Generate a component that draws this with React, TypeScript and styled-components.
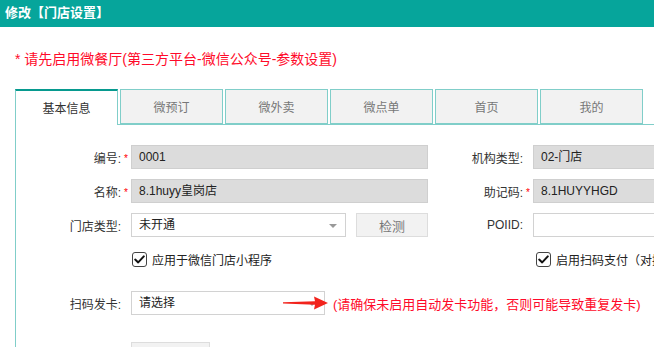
import React from "react";
import styled, { createGlobalStyle } from "styled-components";

const GlobalStyle = createGlobalStyle`
  html, body { margin: 0; padding: 0; background: #fff; }
  body {
    width: 654px; height: 347px; overflow: hidden;
    font-family: "Liberation Sans", Arial, "Noto Sans CJK SC", sans-serif;
    font-size: 12px; color: #333;
  }
  * { box-sizing: border-box; }
`;

const Page = styled.div`
  width: 654px;
  height: 347px;
  overflow: hidden;
`;

const Header = styled.div`
  height: 27px;
  background: #06a59b;
  color: #fff;
  font-weight: bold;
  font-size: 13px;
  line-height: 25px;
  padding-left: 5px;
`;

const Notice = styled.div`
  margin: 22px 0 0 15px;
  height: 20px;
  line-height: 20px;
  font-size: 14px;
  color: #ff0a2a;
`;

const TabsArea = styled.div`
  margin: 20px 0 0 15px;
  width: 700px;
`;

const TabList = styled.div`
  display: flex;
  gap: 2px;
  border-bottom: 1px solid #80cec9;
  height: 36px;
`;

const Tab = styled.div<{ $active?: boolean }>`
  width: 103px;
  height: ${(p) => (p.$active ? "36px" : "35px")};
  display: flex;
  align-items: center;
  justify-content: center;
  font-size: 12px;
  border: 1px solid #80cec9;
  border-top: ${(p) => (p.$active ? "2px solid #079a8f" : "1px solid #80cec9")};
  border-bottom: ${(p) => (p.$active ? "none" : "1px solid #80cec9")};
  background: ${(p) => (p.$active ? "#fff" : "#f2f2f2")};
  color: ${(p) => (p.$active ? "#333" : "#777")};
  padding-bottom: ${(p) => (p.$active ? "2px" : "0")};
`;

const Panel = styled.div`
  border-left: 1px solid #80cec9;
  padding-top: 20px;
  height: 240px;
`;

const Row = styled.div<{ $mt?: number }>`
  display: flex;
  align-items: center;
  height: 24px;
  margin-top: ${(p) => p.$mt ?? 0}px;
  position: relative;
`;

const Label = styled.div<{ $w: number }>`
  width: ${(p) => p.$w}px;
  flex: none;
  text-align: right;
  padding-right: 10px;
  position: relative;
  font-size: 12px;
  color: #333;
`;

const Star = styled.span`
  position: absolute;
  right: 3px;
  top: 5px;
  color: #f00;
  font-size: 10px;
  line-height: 10px;
`;

const Input = styled.div<{ $w: number; $readonly?: boolean }>`
  width: ${(p) => p.$w}px;
  height: 24px;
  flex: none;
  border: 1px solid ${(p) => (p.$readonly ? "#cfcfcf" : "#d2d2d2")};
  background: ${(p) => (p.$readonly ? "#dcdcdc" : "#fff")};
  padding-left: 7px;
  line-height: 22px;
  font-size: 12px;
  color: #222;
  white-space: nowrap;
  overflow: hidden;
`;

const Select = styled(Input)`
  position: relative;
  &::after {
    content: "";
    position: absolute;
    right: 8px;
    top: 10px;
    border-left: 4px solid transparent;
    border-right: 4px solid transparent;
    border-top: 4px solid #999;
  }
`;

const Button = styled.div<{ $w: number; $ml?: number }>`
  width: ${(p) => p.$w}px;
  height: 24px;
  margin-left: ${(p) => p.$ml ?? 0}px;
  flex: none;
  border: 1px solid #ddd;
  background: #f2f2f2;
  color: #777;
  font-size: 13px;
  display: flex;
  align-items: center;
  justify-content: center;
`;

const Spacer = styled.div<{ $w: number }>`
  width: ${(p) => p.$w}px;
  flex: none;
`;

const Check = styled.label<{ $w: number; $ml: number }>`
  width: ${(p) => p.$w}px;
  margin-left: ${(p) => p.$ml}px;
  flex: none;
  display: flex;
  align-items: center;
  gap: 5px;
  font-size: 12px;
  color: #222;
  white-space: nowrap;
`;

const Box = styled.span`
  width: 15px;
  height: 15px;
  border: 1px solid #444;
  border-radius: 3px;
  background: #fff;
  display: flex;
  align-items: center;
  justify-content: center;
  flex: none;
`;

const Warn = styled.div`
  margin-left: 8px;
  color: #ff0a2a;
  font-size: 13px;
  white-space: nowrap;
`;

const Arrow = styled.svg`
  position: absolute;
  left: 267px;
  top: 5px;
`;

const CheckMark = () => (
  <svg width="11" height="9" viewBox="0 0 11 9">
    <path d="M1.2 4.6 L4.2 7.4 L9.8 1.4" fill="none" stroke="#111" strokeWidth="2" strokeLinecap="round" strokeLinejoin="round" />
  </svg>
);

const tabs = ["基本信息", "微预订", "微外卖", "微点单", "首页", "我的"];

export default function App() {
  return (
    <Page>
      <GlobalStyle />
      <Header>修改【门店设置】</Header>
      <Notice>* 请先启用微餐厅(第三方平台-微信公众号-参数设置)</Notice>
      <TabsArea>
        <TabList>
          {tabs.map((t, i) => (
            <Tab key={t} $active={i === 0}>{t}</Tab>
          ))}
        </TabList>
        <Panel>
          <Row>
            <Label $w={115}>编号:<Star>*</Star></Label>
            <Input $w={297} $readonly>0001</Input>
            <Label $w={105}>机构类型:</Label>
            <Input $w={297} $readonly>02-门店</Input>
          </Row>
          <Row $mt={10}>
            <Label $w={115}>名称:<Star>*</Star></Label>
            <Input $w={297} $readonly>8.1huyy皇岗店</Input>
            <Label $w={105}>助记码:<Star>*</Star></Label>
            <Input $w={297} $readonly>8.1HUYYHGD</Input>
          </Row>
          <Row $mt={10}>
            <Label $w={115}>门店类型:</Label>
            <Select $w={215}>未开通</Select>
            <Button $w={72} $ml={10}>检测</Button>
            <Label $w={105}>POIID:</Label>
            <Input $w={297} />
          </Row>
          <Row $mt={10}>
            <Spacer $w={115} />
            <Check $w={297} $ml={1}>
              <Box><CheckMark /></Box>应用于微信门店小程序
            </Check>
            <Check $w={200} $ml={107}>
              <Box><CheckMark /></Box>启用扫码支付（对接微信）
            </Check>
          </Row>
          <Row $mt={20}>
            <Label $w={115}>扫码发卡:</Label>
            <Select $w={194}>请选择</Select>
            <Warn>(请确保未启用自动发卡功能，否则可能导致重复发卡)</Warn>
            <Arrow width="46" height="14" viewBox="0 0 46 14">
              <path d="M0 6.2 L32 5.2 L31 0.5 L45 7 L31 13.5 L32 8.8 L0 7.6 Z" fill="#f2231c" />
            </Arrow>
          </Row>
          <Row $mt={27}>
            <Spacer $w={115} />
            <Button $w={79} />
          </Row>
        </Panel>
      </TabsArea>
    </Page>
  );
}
